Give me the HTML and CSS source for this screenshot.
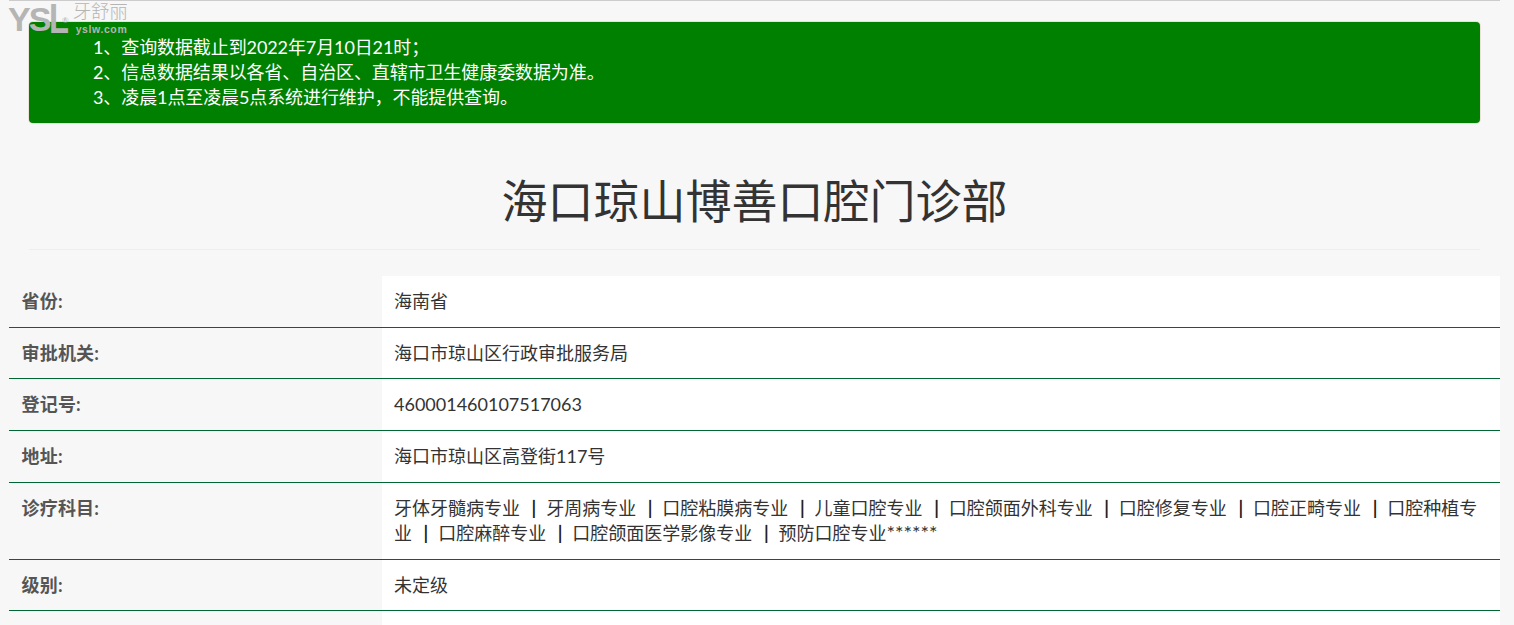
FILE: index.html
```html
<!DOCTYPE html>
<html lang="zh-CN">
<head>
<meta charset="utf-8">
<title>海口琼山博善口腔门诊部</title>
<link rel="stylesheet" href="styles.css">
</head>
<body>
<div class="logo">
  <span class="logo-mark">YS</span><span class="logo-l">L</span><span class="logo-reg">®</span>
  <span class="logo-side"><span class="logo-cn">牙舒丽</span><span class="logo-en">yslw.com</span></span>
</div>
<main class="page">
  <div class="inner">
    <div class="notice">
      <p>1、查询数据截止到2022年7月10日21时；</p>
      <p>2、信息数据结果以各省、自治区、直辖市卫生健康委数据为准。</p>
      <p>3、凌晨1点至凌晨5点系统进行维护，不能提供查询。</p>
    </div>
    <h1 class="title">海口琼山博善口腔门诊部</h1>
  </div>
  <dl class="info">
    <div class="row"><dt>省份:</dt><dd>海南省</dd></div>
    <div class="row"><dt>审批机关:</dt><dd>海口市琼山区行政审批服务局</dd></div>
    <div class="row"><dt>登记号:</dt><dd>460001460107517063</dd></div>
    <div class="row"><dt>地址:</dt><dd>海口市琼山区高登街117号</dd></div>
    <div class="row"><dt>诊疗科目:</dt><dd>牙体牙髓病专业 <b class="sep">|</b> 牙周病专业 <b class="sep">|</b> 口腔粘膜病专业 <b class="sep">|</b> 儿童口腔专业 <b class="sep">|</b> 口腔颌面外科专业 <b class="sep">|</b> 口腔修复专业 <b class="sep">|</b> 口腔正畸专业 <b class="sep">|</b> 口腔种植专<span>业</span> <b class="sep">|</b> 口腔麻醉专业 <b class="sep">|</b> 口腔颌面医学影像专业 <b class="sep">|</b> 预防口腔专业<span class="stars">******</span></dd></div>
    <div class="row"><dt>级别:</dt><dd>未定级</dd></div>
    <div class="row"><dt></dt><dd></dd></div>
  </dl>
</main>
</body>
</html>
```
FILE: styles.css
```css
html, body {
  margin: 0;
  height: 625px;
  overflow: hidden;
}
body {
  background: #f7f7f7;
  color: #333;
  font-family: Lato, "Noto Sans CJK SC", sans-serif;
  font-size: 18px;
  line-height: 25.714px;
}
.page {
  width: 1491px;
  margin-left: 9px;
  border-top: 1px solid #ccc;
  padding-top: 21px;
}
.inner {
  padding: 0 20px;
}
.notice {
  height: 101px;
  box-sizing: border-box;
  background: #008000;
  color: #fff;
  border-radius: 4px;
  padding: 13px 0 0 64px;
  line-height: 25px;
  letter-spacing: -.1px;
  box-shadow: 0 0 0 1px #e8e2d8;
}
.notice p {
  margin: 0;
}
.title {
  margin: 46px 0 26.15px;
  padding-bottom: 16px;
  border-bottom: 1px solid #eee;
  text-align: center;
  font-size: 46px;
  line-height: 64px;
  font-weight: 400;
  color: #333;
}
.info {
  margin: 0;
}
.row {
  display: grid;
  grid-template-columns: 373px 1fr;
  border-bottom: 1px solid #006633;
}
.row dt {
  padding: 13px 13px 11.886px 12.5px;
  font-weight: 700;
  color: #555;
  letter-spacing: .2px;
}
.row dd {
  margin: 0;
  min-height: 25.714px;
  background: #fff;
  padding: 13px 12px 11.886px;
}
.sep {
  margin: 0 5.25px 0 7px;
  color: #222;
}
.stars {
  font-size: 20px;
  line-height: 1;
}
.logo {
  position: absolute;
  top: 0;
  left: 8px;
  display: flex;
  width: 125px;
  height: 36px;
  color: #b5b5b5;
  z-index: 2;
}
.logo-mark {
  font-family: "Liberation Sans", sans-serif;
  font-weight: 700;
  font-size: 34px;
  line-height: 38px;
  letter-spacing: -2px;
}
.logo-l {
  margin-right: -3px;
  font-family: "Liberation Sans", sans-serif;
  font-weight: 700;
  font-size: 43px;
  line-height: 36px;
  transform: scaleX(.76);
  transform-origin: left top;
}
.logo-reg {
  position: absolute;
  left: 54px;
  top: 15px;
  font-size: 8px;
  line-height: 10px;
}
.logo-side {
  display: flex;
  flex-direction: column;
}
.logo-cn {
  font-size: 18.5px;
  line-height: 22px;
  font-weight: 300;
  letter-spacing: -.2px;
}
.logo-en {
  font-family: "Liberation Sans", sans-serif;
  font-size: 10.5px;
  line-height: 12px;
  font-weight: 700;
  margin: 1px 0 0 3px;
  letter-spacing: .6px;
}
```
